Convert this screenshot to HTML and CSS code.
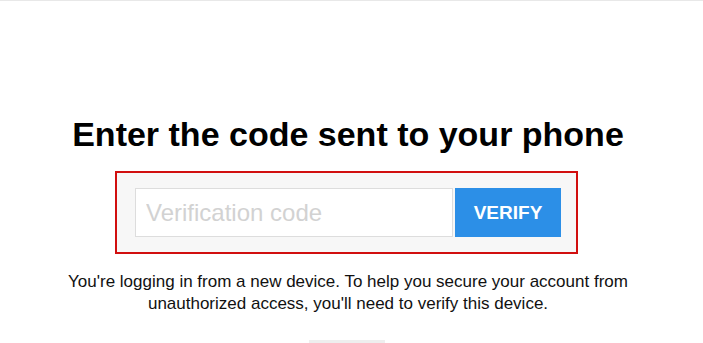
FILE: index.html
```html
<!DOCTYPE html>
<html lang="en">
<head>
<meta charset="utf-8">
<title>Verify device</title>
<link rel="stylesheet" href="styles.css">
</head>
<body>
<div class="topline"></div>
<main class="page">
  <h1 class="title">Enter the code sent to your phone</h1>
  <form class="verify-box">
    <input class="code-input" type="text" placeholder="Verification code">
    <button class="verify-btn" type="button">VERIFY</button>
  </form>
  <p class="note">You're logging in from a new device. To help you secure your account from unauthorized access, you'll need to verify this device.</p>
  <div class="divider"></div>
</main>
</body>
</html>
```
FILE: styles.css
```css
html, body {
  margin: 0;
  padding: 0;
  background: #ffffff;
  font-family: "Liberation Sans", Arial, sans-serif;
  color: #111111;
  overflow: hidden;
}
.topline {
  height: 1px;
  background: #e8e8e8;
}
.page {
  width: 693px;
  display: flex;
  flex-direction: column;
  align-items: center;
  padding-top: 114px;
}
.title {
  margin: 0;
  padding-left: 3px;
  font-size: 34px;
  font-weight: bold;
  line-height: 39px;
  color: #000000;
  text-align: center;
  white-space: nowrap;
}
.verify-box {
  margin: 17px 0 0 0;
  width: 463px;
  box-sizing: border-box;
  border: 2px solid #d10f0f;
  background: #f7f7f7;
  padding: 15px 15px 15px 18px;
  display: flex;
  gap: 2px;
}
.code-input {
  width: 318px;
  height: 49px;
  box-sizing: border-box;
  border: 1px solid #dddddd;
  background: #ffffff;
  padding: 0 10px;
  font-family: "Liberation Sans", Arial, sans-serif;
  font-size: 24px;
  color: #333333;
  outline: none;
}
.code-input::placeholder {
  color: #d2d2d2;
}
.verify-btn {
  width: 106px;
  height: 49px;
  border: none;
  background: #2c8fe7;
  color: #ffffff;
  font-family: "Liberation Sans", Arial, sans-serif;
  font-size: 19px;
  font-weight: bold;
  padding: 0;
}
.note {
  margin: 17px 0 0 0;
  padding-left: 3px;
  width: 600px;
  text-align: center;
  font-size: 17px;
  line-height: 22px;
  color: #111111;
}
.divider {
  margin-top: 25px;
  width: 76px;
  height: 3px;
  background: #eeeeee;
}
```
